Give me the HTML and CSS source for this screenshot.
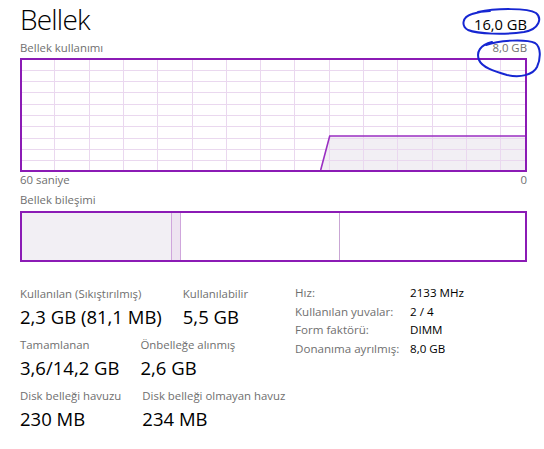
FILE: index.html
```html
<!DOCTYPE html>
<html lang="tr">
<head>
<meta charset="utf-8">
<title>Bellek</title>
<link rel="stylesheet" href="styles.css">
</head>
<body>
<div class="page">
  <header class="head">
    <h1 class="title">Bellek</h1>
    <span class="total">16,0 GB</span>
  </header>
  <div class="sub">
    <span>Bellek kullanımı</span>
    <span>8,0 GB</span>
  </div>
  <div class="graph">
    <svg class="graph-svg" width="503" height="110" viewBox="0 0 503 110">
      <polygon class="fill" points="298.7,110 307.7,76 503,76 503,110"/>
      <g class="grid">
        <line x1="32.5" y1="0" x2="32.5" y2="110"/>
        <line x1="67.5" y1="0" x2="67.5" y2="110"/>
        <line x1="101.5" y1="0" x2="101.5" y2="110"/>
        <line x1="135.5" y1="0" x2="135.5" y2="110"/>
        <line x1="170.5" y1="0" x2="170.5" y2="110"/>
        <line x1="204.5" y1="0" x2="204.5" y2="110"/>
        <line x1="238.5" y1="0" x2="238.5" y2="110"/>
        <line x1="272.5" y1="0" x2="272.5" y2="110"/>
        <line x1="307.5" y1="0" x2="307.5" y2="110"/>
        <line x1="341.5" y1="0" x2="341.5" y2="110"/>
        <line x1="375.5" y1="0" x2="375.5" y2="110"/>
        <line x1="410.5" y1="0" x2="410.5" y2="110"/>
        <line x1="444.5" y1="0" x2="444.5" y2="110"/>
        <line x1="478.5" y1="0" x2="478.5" y2="110"/>
        <line x1="0" y1="10.5" x2="503" y2="10.5"/>
        <line x1="0" y1="21.5" x2="503" y2="21.5"/>
        <line x1="0" y1="32.5" x2="503" y2="32.5"/>
        <line x1="0" y1="44.5" x2="503" y2="44.5"/>
        <line x1="0" y1="55.5" x2="503" y2="55.5"/>
        <line x1="0" y1="66.5" x2="503" y2="66.5"/>
        <line x1="0" y1="78.5" x2="503" y2="78.5"/>
        <line x1="0" y1="89.5" x2="503" y2="89.5"/>
        <line x1="0" y1="100.5" x2="503" y2="100.5"/>
      </g>
      <polyline class="usage" points="298.7,110 307.7,76 503,76"/>
    </svg>
  </div>
  <div class="axis">
    <span>60 saniye</span>
    <span>0</span>
  </div>
  <div class="sub comp-label">Bellek bileşimi</div>
  <div class="comp">
    <div class="seg inuse"></div>
    <div class="seg modified"></div>
    <div class="seg standby"></div>
    <div class="seg free"></div>
  </div>
  <section class="stats">
    <div class="left">
      <div class="row">
        <div class="stat"><div class="lbl">Kullanılan (Sıkıştırılmış)</div><div class="val">2,3 GB (81,1 MB)</div></div>
        <div class="stat"><div class="lbl">Kullanılabilir</div><div class="val">5,5 GB</div></div>
      </div>
      <div class="row">
        <div class="stat"><div class="lbl">Tamamlanan</div><div class="val">3,6/14,2 GB</div></div>
        <div class="stat"><div class="lbl">Önbelleğe alınmış</div><div class="val">2,6 GB</div></div>
      </div>
      <div class="row">
        <div class="stat"><div class="lbl">Disk belleği havuzu</div><div class="val">230 MB</div></div>
        <div class="stat"><div class="lbl">Disk belleği olmayan havuz</div><div class="val">234 MB</div></div>
      </div>
    </div>
    <dl class="right">
      <dt>Hız:</dt><dd>2133 MHz</dd>
      <dt>Kullanılan yuvalar:</dt><dd>2 / 4</dd>
      <dt>Form faktörü:</dt><dd>DIMM</dd>
      <dt>Donanıma ayrılmış:</dt><dd>8,0 GB</dd>
    </dl>
  </section>
</div>
<svg class="marks" width="544" height="449" viewBox="0 0 544 449">
  <path d="M478 12 C496 8 528 8 536 13 C542 18 540 29 524 32 C504 35 478 34 468 30 C461 26 462 17 472 14 C478 12 484 11 490 11"/>
  <path d="M486 45 C500 40 526 39 535 43 C541 47 541 58 537 67 C533 75 520 78 507 75 C493 71 482 67 479 60 C476 52 480 45 492 42"/>
</svg>
</body>
</html>
```

FILE: styles.css
```css
html, body {
  margin: 0;
  padding: 0;
  background: #ffffff;
}

body {
  font-family: "Open Sans", "Noto Sans", "DejaVu Sans", sans-serif;
  color: #000000;
  width: 544px;
  height: 449px;
  overflow: hidden;
  position: relative;
}

.page {
  padding: 0 17px 0 20px;
}

.head {
  display: flex;
  justify-content: space-between;
  align-items: baseline;
  height: 38px;
}

.title {
  margin: 0;
  font-size: 28px;
  font-weight: 300;
  line-height: 38px;
  letter-spacing: -0.8px;
}

.total {
  font-size: 14.7px;
  line-height: 20px;
}

.sub {
  display: flex;
  justify-content: space-between;
  margin-top: 2px;
  font-size: 11.4px;
  line-height: 16px;
  color: #6f6f6f;
}

.graph {
  margin-top: 2px;
  height: 114px;
  border: 2px solid #8b1bb5;
  box-sizing: border-box;
}

.graph-svg {
  display: block;
}

.graph-svg .fill {
  fill: #f2eff4;
}

.graph-svg .grid line {
  stroke: #ead8ef;
  stroke-width: 1;
  shape-rendering: crispEdges;
}

.graph-svg .usage {
  fill: none;
  stroke: #9a2fc2;
  stroke-width: 1.6;
}

.axis {
  display: flex;
  justify-content: space-between;
  font-size: 11.4px;
  line-height: 16px;
  color: #6f6f6f;
}

.comp-label {
  margin-top: 4px;
}

.comp {
  margin-top: 3px;
  height: 51px;
  border: 2px solid #8b1bb5;
  box-sizing: border-box;
  display: flex;
}

.seg {
  height: 100%;
  box-sizing: border-box;
}

.inuse {
  width: 149px;
  background: #f2eff4;
}

.modified {
  width: 10px;
  background: #eee4f1;
  border-left: 1px solid #cfa6dc;
  border-right: 1px solid #cfa6dc;
}

.standby {
  width: 158px;
  background: #ffffff;
}

.free {
  flex: 1;
  border-left: 1px solid #c9a6d4;
}

.stats {
  display: flex;
  margin-top: 24px;
}

.left {
  width: 275px;
}

.row {
  display: flex;
  gap: 21px;
  margin-bottom: 8px;
}

.lbl {
  font-size: 11.4px;
  line-height: 16px;
  color: #6f6f6f;
  white-space: nowrap;
}

.val {
  margin-top: 2px;
  font-size: 18.5px;
  line-height: 25px;
  white-space: nowrap;
}

.right {
  margin: -2px 0 0 0;
  display: grid;
  grid-template-columns: 115px auto;
  grid-auto-rows: 18.5px;
  align-content: start;
  font-size: 11.6px;
  line-height: 18.5px;
}

.right dt {
  color: #6f6f6f;
  white-space: nowrap;
}

.right dd {
  margin: 0;
  color: #000000;
  white-space: nowrap;
}

.marks {
  position: absolute;
  top: 0;
  left: 0;
  pointer-events: none;
}

.marks path {
  fill: none;
  stroke: #1626d2;
  stroke-width: 2;
  stroke-linecap: round;
}
```
